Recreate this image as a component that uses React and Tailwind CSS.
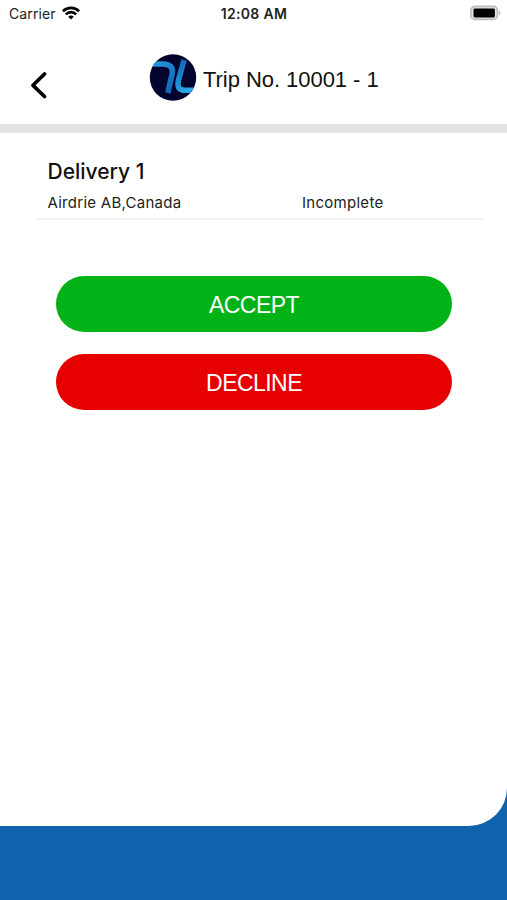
function StatusBar() {
  return (
    <div className="grid h-7 grid-cols-[1fr_auto_1fr] items-center pl-[9px] pr-[8px] font-['Inter',sans-serif] text-[#222]">
      <div className="flex items-center gap-[6px]">
        <span className="text-[14px] leading-7 tracking-[0.12px]">Carrier</span>
        <svg className="-mt-[2px]" width="18" height="14" viewBox="0 0 18 14" fill="none" stroke="#000" strokeWidth="2.6">
          <path d="M0.9 5.2a11.6 11.6 0 0 1 16.2 0" />
          <path d="M3.8 8.3a7.4 7.4 0 0 1 10.4 0" />
          <path d="M9 13.6L6.2 10.8a4 4 0 0 1 5.6 0z" fill="#000" stroke="none" />
        </svg>
      </div>
      <span className="text-center text-[14px] font-semibold leading-7 tracking-[0.35px]">12:08 AM</span>
      <svg className="-mr-[2px] -mt-[2px] justify-self-end" width="31" height="16" viewBox="0 0 31 16">
        <rect x="1" y="1.4" width="26.4" height="13" rx="4" fill="#e4e4e4" stroke="#bdbdbd" strokeWidth="1.8" />
        <rect x="3.5" y="3.6" width="21.4" height="8.8" rx="1.4" fill="#000" />
        <path d="M28.8 5.6c2.2.9 2.2 3.8 0 4.7z" fill="#bdbdbd" />
      </svg>
    </div>
  );
}

function Logo() {
  return (
    <svg width="48" height="47" viewBox="-0.5 0 48 47">
      <defs>
        <clipPath id="disc"><circle cx="23.5" cy="23.5" r="23.2" /></clipPath>
        <linearGradient id="left" x1="0" y1="0" x2="0.7" y2="1">
          <stop offset="0" stopColor="#2499dc" />
          <stop offset="1" stopColor="#1268b8" />
        </linearGradient>
        <linearGradient id="right" x1="0" y1="0" x2="0.4" y2="1">
          <stop offset="0" stopColor="#1260ae" />
          <stop offset="1" stopColor="#27a5e6" />
        </linearGradient>
      </defs>
      <circle cx="23.5" cy="23.5" r="23.2" fill="#03032f" />
      <g clipPath="url(#disc)" fill="none" strokeWidth="5.6">
        <path d="M2 10H13C20.5 10 24 13.5 22.700 20L18.300 39" stroke="url(#left)" />
        <path d="M34.500 6L29 26C27.200 33.500 30 36.300 36 36.300H46" stroke="url(#right)" />
      </g>
    </svg>
  );
}

function Header() {
  return (
    <header className="flex h-[105px] items-start border-b-[9px] border-[#e3e3e3] pl-[30px]">
      <svg className="mt-[43px]" width="18" height="28" viewBox="0 0 18 28" fill="none" stroke="#000" strokeWidth="3.7" strokeLinecap="round" strokeLinejoin="round">
        <path d="M14.5 3L3 14.3L14.5 25.5" />
      </svg>
      <div className="ml-[101px] mt-[26px] flex h-[47px] items-center gap-[6px]">
        <Logo />
        <h1 className="pt-[5px] font-['Liberation_Sans',sans-serif] text-[22px] leading-[42px] tracking-[-0.05px] text-[#111]">Trip No. 10001 - 1</h1>
      </div>
    </header>
  );
}

export default function App() {
  return (
    <div className="h-[900px] w-[507px] overflow-hidden bg-[#0f62ac]">
      <div className="h-[826px] rounded-br-[38px] bg-white">
        <StatusBar />
        <Header />
        <main>
          <section className="ml-9 mr-[23px] h-[87px] border-b-2 border-[#f4f4f4] pl-[12px] pt-[25px] font-['Inter',sans-serif] text-[#111]">
            <h2 className="-ml-[0.5px] text-[21px] font-medium leading-7">Delivery 1</h2>
            <div className="mt-[7px] grid grid-cols-[254px_1fr] text-[15px] leading-5 tracking-[0.28px] text-[#222]">
              <span className="-ml-[0.5px]">Airdrie AB,Canada</span>
              <span>Incomplete</span>
            </div>
          </section>
          <div className="ml-14 mr-[55px] mt-[56px] flex flex-col gap-[22px] font-['Liberation_Sans',sans-serif] text-[23px] tracking-[-0.55px] text-white">
            <button className="h-14 rounded-full bg-[#02b317] pt-[2px]">ACCEPT</button>
            <button className="h-14 rounded-full bg-[#e60000] pt-[2px]">DECLINE</button>
          </div>
        </main>
      </div>
    </div>
  );
}
